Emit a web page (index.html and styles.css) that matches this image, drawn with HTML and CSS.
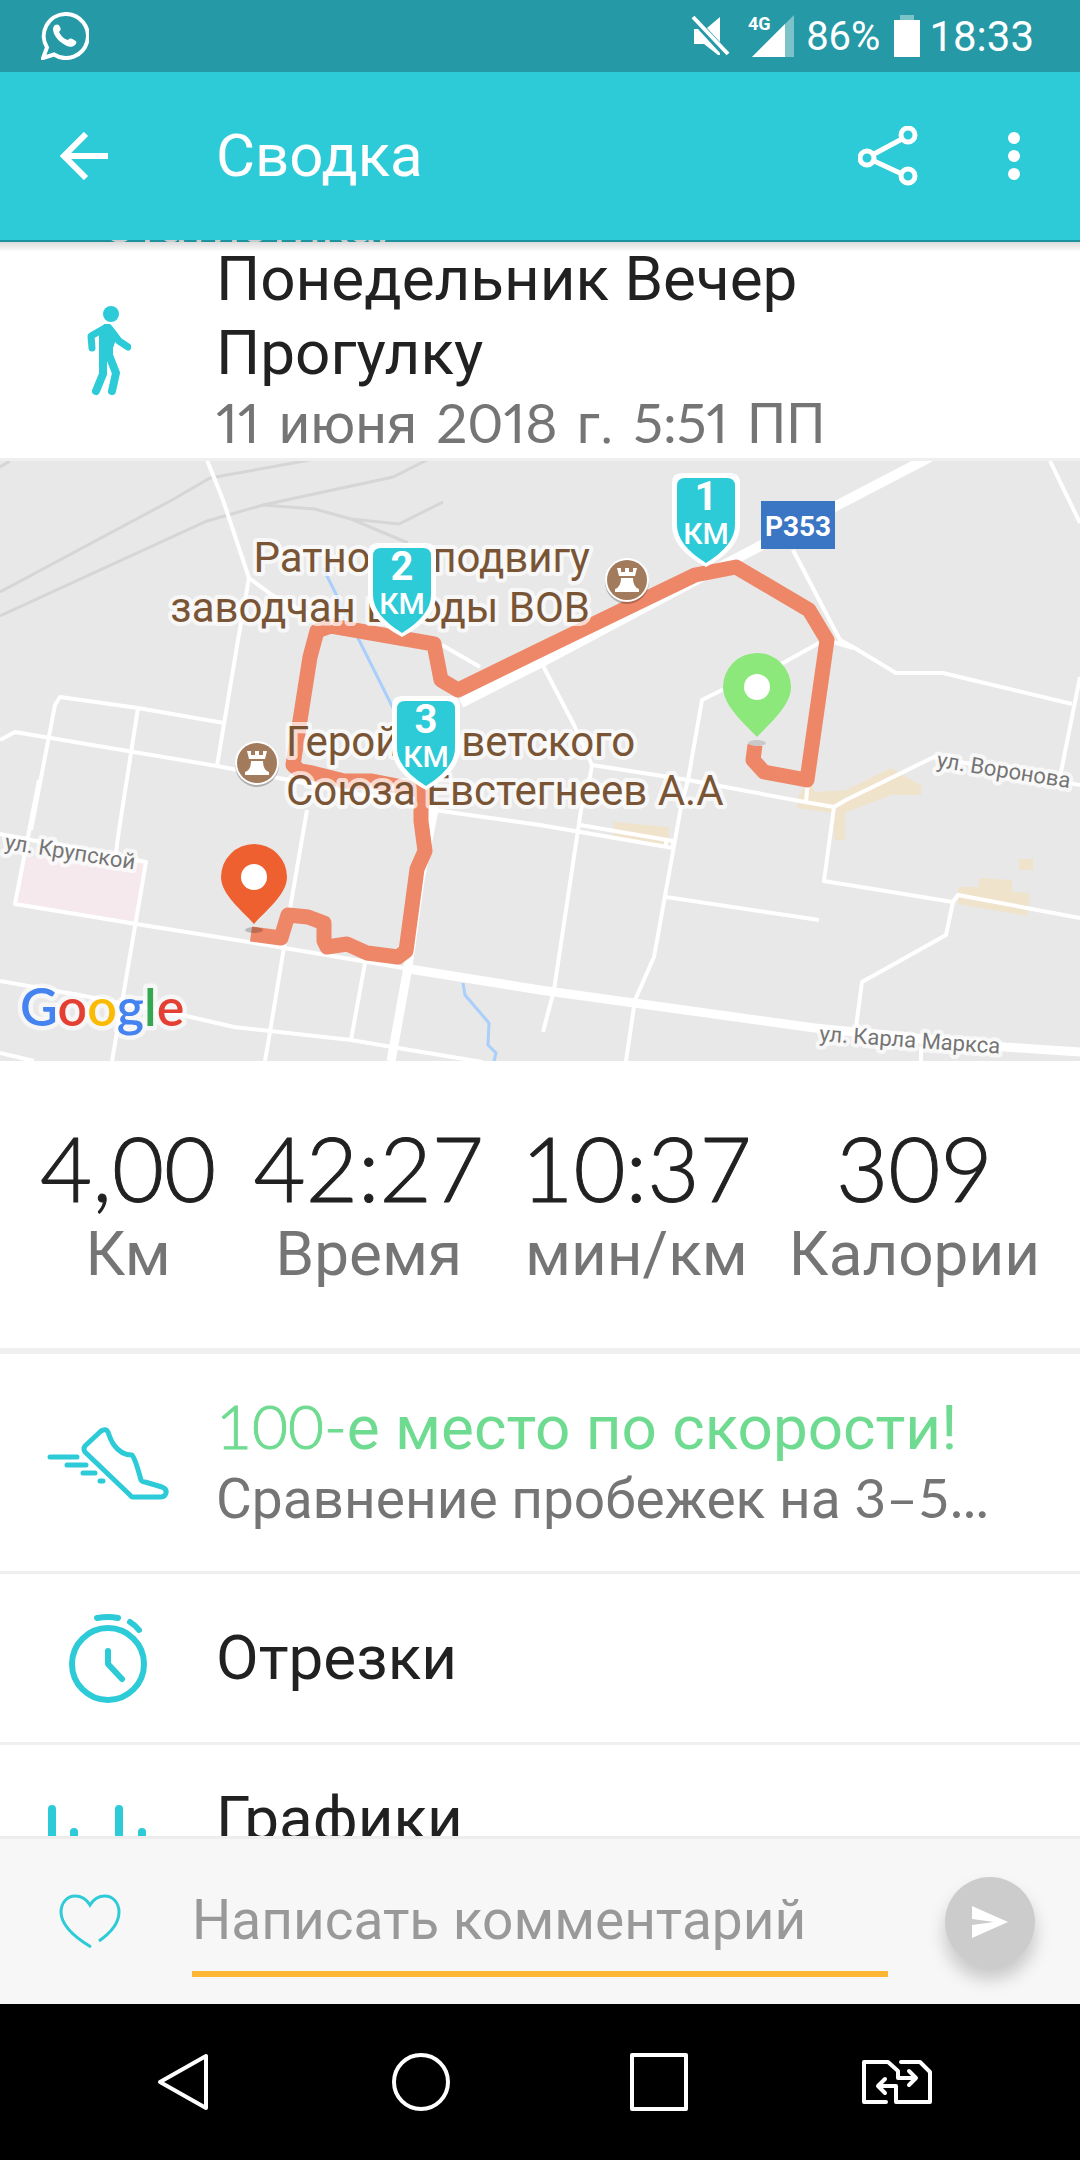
FILE: index.html
```html
<!DOCTYPE html>
<html lang="ru">
<head>
<meta charset="utf-8">
<meta name="viewport" content="width=device-width, initial-scale=1">
<title>Сводка</title>
<link rel="stylesheet" href="styles.css">
</head>
<body>
<div class="app">
  <div class="status">
    <svg class="status-app" width="48" height="48" viewBox="0 0 48 48" aria-hidden="true">
      <path d="M24 2a22 22 0 1 1-11 40.500L2 46l4-10.500A22 22 0 0 1 24 2z" fill="none" stroke="#fff" stroke-width="4"/>
      <path d="M14 13c2-1 4-1 5 2 1 2 1 3-1 5 2 4 5 7 9 8 2-2 3-2 6 0 3 1 3 3 1 5-3 3-8 2-13-2-6-4-9-10-9-14 0-2 1-3 2-4z" fill="#fff"/>
    </svg>
    <svg width="40" height="42" viewBox="0 0 40 42" aria-hidden="true">
      <path d="M2 2l35 37" stroke="#fff" stroke-width="4"/>
      <path d="M16 13L29 2v25zM3 14h4l22 24v2h-2L13 29H3z" fill="#fff"/>
    </svg>
    <svg class="status-signal" width="48" height="44" viewBox="0 0 48 44" aria-hidden="true">
      <path d="M46 1v42H4z" fill="#fff" fill-opacity=".4"/>
      <path d="M37 10v33H4z" fill="#fff"/>
      <text x="0" y="16" class="net">4G</text>
    </svg>
    <span class="status-battery-text">86%</span>
    <svg class="status-battery" width="26" height="42" viewBox="0 0 26 42" aria-hidden="true">
      <path d="M6 0h14v5H6z" fill="#fff" fill-opacity=".4"/>
      <path d="M0 5h26v37H0z" fill="#fff"/>
    </svg>
    <span class="status-time">18:33</span>
  </div>

  <header class="bar">
    <button class="icon-btn bar-back" type="button" aria-label="Назад">
      <svg width="48" height="48" viewBox="0 0 48 48"><path d="M26 2L4 24l22 22M4 24h44" fill="none" stroke="#fff" stroke-width="6"/></svg>
    </button>
    <h1 class="bar-title">Сводка</h1>
    <button class="icon-btn bar-share" type="button" aria-label="Поделиться">
      <svg width="60" height="60" viewBox="0 0 60 60" fill="none" stroke="#fff" stroke-width="5">
        <circle cx="50" cy="9" r="7"/><circle cx="9" cy="32" r="7"/><circle cx="50" cy="50" r="7"/>
        <path d="M16 28l28-15M16 35l28 13"/>
      </svg>
    </button>
    <button class="icon-btn bar-more" type="button" aria-label="Ещё">
      <svg width="12" height="48" viewBox="0 0 12 48" fill="#fff"><circle cx="6" cy="6" r="6"/><circle cx="6" cy="24" r="6"/><circle cx="6" cy="42" r="6"/></svg>
    </button>
  </header>

  <main class="content">
    <div class="strip"><div class="strip-text">Статистика:</div></div>

    <section class="row head">
      <svg width="46" height="92" viewBox="85 304 46 92" fill="none" stroke="#2dcad7" stroke-width="8" stroke-linecap="round" stroke-linejoin="round" aria-hidden="true">
        <circle cx="111" cy="314" r="8" fill="#2dcad7" stroke="none"/>
        <path d="M104 324h6l8 10-5 14v6H99v-20z" fill="#2dcad7" stroke="none"/>
        <path d="M108 328h-3l-14 8 1 12" stroke-width="7"/>
        <path d="M109 328l10 13 9 6" stroke-width="7"/>
        <path d="M103 350v24l-7 17M107 350l9 23-4 18"/>
      </svg>
      <div>
        <h2 class="title">Понедельник Вечер<br>Прогулку</h2>
        <p class="sub date"><span class="num">11</span> <span>июня</span> <span class="num">2018</span> <span>г.</span> <span class="num">5:51</span> <span>ПП</span></p>
      </div>
    </section>

    <svg class="map" viewBox="0 461 1080 600" role="img" aria-label="Карта маршрута">
      <defs>
        <g id="km">
          <path d="M-24-90H24Q34-90 34-80V-38Q34-14 0 4Q-34-14-34-38V-80Q-34-90-24-90z" fill="#fff"/>
          <path d="M-21-85H21Q29-85 29-77V-38Q29-18 0 0Q-29-18-29-38V-77Q-29-85-21-85z" fill="#2dcad7"/>
        </g>
        <g id="tower">
          <circle cy="2" r="22" fill="#000" fill-opacity=".25"/>
          <circle r="22" fill="#fff"/><circle r="20" fill="#a27a5c"/>
          <path d="M-10-12h4v4h4v-4h4v4h4v-4h4l-2 8H-8zM-6-2H6Q6 7 12 9V12H-12V9Q-6 7-6-2z" fill="#fff"/>
        </g>
      </defs>
      <rect y="461" width="1080" height="600" fill="#e8e8e8"/>
      <g fill="#f0e3cb">
        <path d="M614 822l55 5v21l-55-10zM798 797l-1 11 36 5 1 27h11v-27l46-18h30l1-9-31-18-45 22-31 2-6-12zM958 887h21v-9l33 2v12l18 1-3 23-69-12zM1019 859h14v11h-14z"/>
      </g>
      <path d="M26 857l120 5-10 61-121-19z" fill="#f5e9ee"/>
      <g fill="none" stroke="#d6d6d6" stroke-width="3">
        <path d="M0 467l10-6M0 592l172-92 38-22 100-18M0 616l207-95 56-16 130-28 34-17M263 505l52 4 36 10 57 24M351 519l48 5 44-22"/>
      </g>
      <g fill="none" stroke="#a9cffa" stroke-width="3"><path d="M323 568l70 140M463 983l2 12 24 28-1 22 8 8-2 8"/></g>
      <g fill="none" stroke="#fff" stroke-width="4" stroke-linejoin="round">
        <path d="M207 460l16 40 26 78 23 17 48 26M249 578l-11 62-21 126M0 740l15-8 202 34 72 14 145 30 106 15 133 23"/>
        <path d="M31 830l24-125 5-8 78 11 86 15M138 708l-19 122-4 30M39 780L15 904l121 20 119 19 148 25M0 834l146 28-34 199"/>
        <path d="M0 981l79 14 103 20 52 12 117 13 47 8 84 14M0 1053l34 8M307 810l-16 93-7 44-14 85-5 29M365 963l-14 77"/>
        <path d="M540 660l34 65 18 40-2 12-9 33-27 180-11 42M592 765l96 15 117 22 29 5 12-7 88-43 146 28"/>
        <path d="M1050 461l30 62M793 550l47 90 13 7 43 26h47l129 31M1080 677l-20 100M819 643l-36 20-61 27-20 10-14 80-7 27-27 150-19 43-9 61M827 640l26 8"/>
        <path d="M580 825l93 16v7M666 841v7M666 897l153 23M834 807l-10 74 129 21 5-7 122 23M953 902l-7 33-84 47-6 45M921 1047v14M808 780l-2 22M442 645l38 22"/>
        <path d="M425 810h9l-14 70-12 87-17 94M403 968l137 22 275 38 190 19 75 5" stroke-width="9"/>
        <path d="M930 457l-94 49-76 40-34 18-186 99-79 40" stroke-width="10"/>
      </g>
      <path d="M755 745l-2 15 11 12 43 8 20-140-18-30-73-43-41 8-155 75-82 40-17-10-7-36-103-18-14 5-7 26-17 108 7 6 12 2 32 8h28l51 10-2 20v10l4 30-8 18-11 82-8 6-31-4-20-9-20 3-3-6v-18l-16-6-20-2-7 23-30-4" fill="none" stroke="#ed8767" stroke-width="15" stroke-linejoin="round"/>
      <g class="street">
        <text x="936" y="767" transform="rotate(9 936 767)">ул. Воронова</text>
        <text x="4" y="849" transform="rotate(9 4 849)">ул. Крупской</text>
        <text x="819" y="1041" transform="rotate(4 819 1041)">ул. Карла Маркса</text>
      </g>
      <g class="place">
        <text x="590" y="572" text-anchor="end">Ратному подвигу</text>
        <text x="590" y="622" text-anchor="end">заводчан в годы ВОВ</text>
        <text x="286" y="756">Герой Советского</text>
        <text x="286" y="805">Союза Евстегнеев А.А</text>
      </g>
      <use href="#tower" x="627" y="580"/><use href="#tower" x="257" y="763"/>
      <rect x="761" y="501" width="74" height="48" fill="#3a76c4"/>
      <text class="road" x="798" y="536">P353</text>
      <use href="#km" x="706" y="563"/><use href="#km" x="402" y="633"/><use href="#km" x="426" y="786"/>
      <g class="km-num"><text x="706" y="510">1</text><text x="402" y="580">2</text><text x="426" y="733">3</text></g>
      <g class="km-unit"><text x="706" y="544">КМ</text><text x="402" y="614">КМ</text><text x="426" y="767">КМ</text></g>
      <ellipse cx="757" cy="743" rx="9" ry="3" fill="#c9c9c9"/>
      <path d="M757 737C745 724 723 706 723 687a34 34 0 0 1 68 0C791 706 769 724 757 737z" fill="#8de87c"/>
      <circle cx="757" cy="687" r="13" fill="#fff"/>
      <ellipse cx="254" cy="930" rx="9" ry="3" fill="#000" fill-opacity=".2"/>
      <path d="M254 924C244 912 221 895 221 877a33 33 0 0 1 66 0C287 895 264 912 254 924z" fill="#ee6030"/>
      <circle cx="254" cy="877" r="13" fill="#fff"/>
      <text class="google" x="20" y="1026"><tspan fill="#4583f0">G</tspan><tspan fill="#e34033">o</tspan><tspan fill="#fabb05">o</tspan><tspan fill="#4583f0">g</tspan><tspan fill="#34a751">l</tspan><tspan fill="#e34033">e</tspan></text>
    </svg>

    <dl class="stats">
      <div class="stat"><dd class="stat-value">4,00</dd><dt class="stat-label">Км</dt></div>
      <div class="stat"><dd class="stat-value">42:27</dd><dt class="stat-label">Время</dt></div>
      <div class="stat"><dd class="stat-value">10:37</dd><dt class="stat-label">мин/км</dt></div>
      <div class="stat"><dd class="stat-value">309</dd><dt class="stat-label">Калории</dt></div>
    </dl>

    <a class="row item" href="#rank">
      <svg width="122" height="74" viewBox="47 1426 122 74" fill="none" stroke="#2dcad7" stroke-width="5" stroke-linecap="round" stroke-linejoin="round" aria-hidden="true">
        <path d="M101 1431q5-3 7 1 3 9 6 13 7 10 18 10 3 3 9 25 1 2 4 2l17 5q5 2 4 6t-5 4h-28q-2 0-3-2l-45-43q-2-3 0-6z"/>
        <path d="M50 1457h27M67 1465h19M83 1473h12M100 1481h3"/>
      </svg>
      <div class="item-text">
        <span class="title rank"><span class="num">100-</span>е место по скорости!</span>
        <span class="sub ellipsis">Сравнение пробежек на <span class="num">3–5...</span></span>
      </div>
    </a>
    <a class="row item single" href="#splits">
      <svg width="80" height="92" viewBox="68 1612 80 92" fill="none" stroke="#2dcad7" stroke-width="6" stroke-linecap="round" stroke-linejoin="round" aria-hidden="true">
        <circle cx="108" cy="1664" r="36"/>
        <path d="M108 1651v13l14 15M97 1618q11-2 21 0M130 1622q5 3 9 8"/>
      </svg>
      <span class="title">Отрезки</span>
    </a>
    <a class="row item" href="#charts">
      <svg width="120" height="104" viewBox="48 1798 120 104" fill="none" stroke="#2dcad7" stroke-width="8" stroke-linecap="round" aria-hidden="true">
        <path d="M52 1805v93M74 1828v70M97 1850v48M119 1805v93M142 1828v70"/>
      </svg>
      <div class="item-text"><span class="title">Графики</span></div>
    </a>
  </main>

  <form class="comment">
    <button class="icon-btn comment-like" type="button" aria-label="Нравится">
      <svg width="64" height="60" viewBox="58 1893 64 60" fill="none" stroke="#2dcad7" stroke-width="3"><path d="M91 1948C76 1939 61 1927 61 1913c0-9 6-16 14-16 7 0 12 4 15 9 3-5 8-9 15-9 8 0 14 7 14 16 0 12-10 22-20 29"/></svg>
    </button>
    <input class="comment-input" type="text" aria-label="Комментарий" placeholder="Написать комментарий">
    <button class="send" type="submit" aria-label="Отправить">
      <svg width="38" height="34" viewBox="0 0 38 34" fill="#fff"><path d="M1 1l36 16L1 33V20l22-3L1 14z"/></svg>
    </button>
  </form>

  <nav class="nav" aria-label="Навигация">
    <button class="icon-btn" type="button" aria-label="Назад"><svg width="56" height="60" viewBox="156 2052 56 60" fill="none" stroke="#fff" stroke-width="4"><path d="M206 2056v52l-46-26z" stroke-linejoin="round"/></svg></button>
    <button class="icon-btn" type="button" aria-label="Домой"><svg width="60" height="60" viewBox="0 0 60 60" fill="none" stroke="#fff" stroke-width="4"><circle cx="30" cy="30" r="27"/></svg></button>
    <button class="icon-btn" type="button" aria-label="Обзор"><svg width="60" height="60" viewBox="0 0 60 60" fill="none" stroke="#fff" stroke-width="4" stroke-linejoin="round"><path d="M3 3h54v54H3z"/></svg></button>
    <button class="icon-btn" type="button" aria-label="Сменить SIM"><svg width="72" height="48" viewBox="860 2058 72 48" fill="none" stroke="#fff" stroke-width="4" stroke-linecap="round" stroke-linejoin="round"><path d="M886 2102h-22v-40h24l10 9v7h18M901 2062h19l10 10v30h-34v-16h-18M909 2071l7 7-7 7M885 2079l-7 7 7 7"/></svg></button>
  </nav>
</div>
</body>
</html>
```
FILE: styles.css
```css
* { box-sizing: border-box; }
body { margin: 0; font-family: Roboto, "Noto Sans", sans-serif; color: #212121; background: #fff; }
h1, h2, p, dl, dd { margin: 0; font-weight: 400; }
svg { display: block; flex: none; }
button { font: inherit; border: 0; padding: 0; background: none; }
.icon-btn { display: flex; flex: none; align-items: center; justify-content: center; }

.app { display: flex; flex-direction: column; height: 100vh; }

.status { display: flex; flex: none; align-items: center; height: 72px; padding: 0 46px 0 41px; background: #2599a6; color: #fff; }
.status-app { margin-right: auto; }
.status-signal { margin: 0 10px 0 17px; }
.net { font-size: 18px; font-weight: 700; fill: #fff; }
.status-battery-text { font-size: 40px; margin-right: 14px; }
.status-battery { margin-right: 9px; }
.status-time { font-size: 42px; }

.bar { display: flex; flex: none; align-items: center; height: 168px; padding: 0 60px; background: #2dcad7; color: #fff; }
.bar-back { width: 48px; margin-right: 108px; }
.bar-title { flex: 1; font-size: 60px; line-height: 68px; }
.bar-more { width: 12px; margin-left: 90px; }

.content { flex: 1 1 0; min-height: 0; overflow: hidden; }
.strip { height: 2px; overflow: hidden; padding-left: 102px; background: #1d929e; }
.strip-text { margin-top: -48px; font-size: 51px; line-height: 66px; color: #c9cccc; }

.row { display: grid; grid-template-columns: 216px minmax(0, 1fr); align-items: center; color: inherit; text-decoration: none; }
.row > svg { justify-self: center; }
.head { border-bottom: 3px solid #efefef; background: linear-gradient(#dcdcdc, #fff 10px); }
.title { display: block; font-size: 62px; line-height: 74px; }
.sub { display: block; font-size: 55px; line-height: 68px; color: #757575; }
.num { font-family: Lato, Roboto, sans-serif; line-height: 1; }
.date { display: flex; align-items: baseline; gap: 19px; height: 68px; font-variant-numeric: proportional-nums; }
.ellipsis { overflow: hidden; white-space: nowrap; text-overflow: ellipsis; }

.map { width: 100%; height: auto; }
.place { font-size: 42px; fill: #7a5535; }
.street { font-size: 22px; fill: #757575; }
.place, .street { paint-order: stroke; stroke: rgba(255, 255, 255, .7); stroke-width: 8px; stroke-linejoin: round; }
.road { font-size: 28px; font-weight: 700; fill: #fff; text-anchor: middle; }
.km-num { font-size: 40px; font-weight: 700; fill: #fff; text-anchor: middle; }
.km-unit { font-size: 30px; font-weight: 500; fill: #fff; text-anchor: middle; }
.google { font-family: Lato, sans-serif; font-size: 52px; font-weight: 600; paint-order: stroke; stroke: rgba(255, 255, 255, .6); stroke-width: 9px; stroke-linejoin: round; }

.stats { display: flex; justify-content: space-between; padding: 57px 40px; border-bottom: 6px solid #efefef; }
.stat { display: flex; flex-direction: column; align-items: center; }
.stat-value { font-family: Lato, Roboto, sans-serif; font-weight: 300; font-size: 90px; line-height: 99px; -webkit-text-stroke: 1px currentColor; }
.stat-label { font-size: 62px; line-height: 74px; color: #757575; }

.item { padding: 37px 0; border-bottom: 3px solid #efefef; }
.item-text { min-height: 143px; padding-right: 60px; }
.single { padding: 47px 0; }
.single > svg { margin: -9px 0; }
.rank { color: #6fdb91; }
.rank .num { font-weight: 300; -webkit-text-stroke: 1px currentColor; }

.comment { display: flex; flex: none; align-items: center; height: 168px; padding: 0 45px 0 58px; border-top: 3px solid #ededed; background: #f7f7f7; }
.comment-like { width: 64px; margin-right: 70px; }
.comment-input { flex: 1; min-width: 0; height: 110px; padding: 2px 0 0; border: 0; border-bottom: 6px solid #fdb735; border-radius: 0; outline: 0; background: none; color: #212121; font: 55px Roboto, sans-serif; }
.comment-input::placeholder { color: #999; opacity: 1; }
.send { display: flex; flex: none; align-items: center; justify-content: center; width: 90px; height: 90px; margin-left: 57px; border-radius: 50%; background: #ccc; box-shadow: 0 12px 18px rgba(0, 0, 0, .2); }

.nav { display: grid; flex: none; grid-template-columns: repeat(4, 1fr); align-items: center; height: 156px; padding: 0 65px; background: #000; }
```
